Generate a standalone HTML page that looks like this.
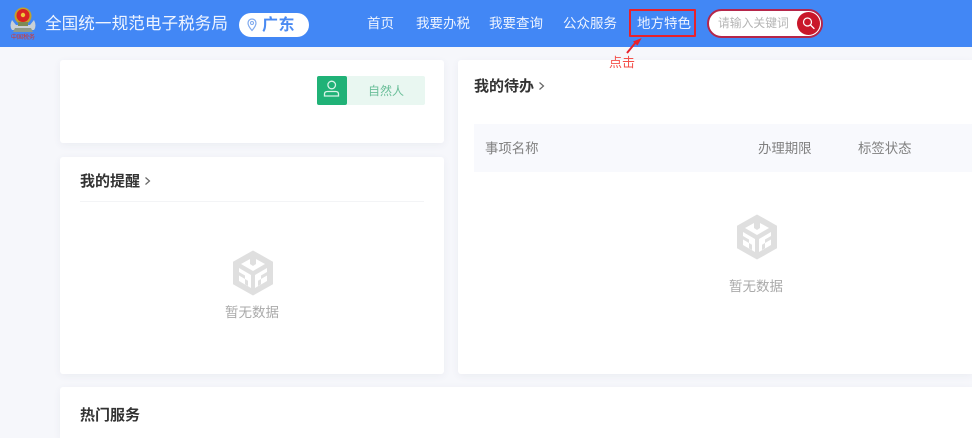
<!DOCTYPE html>
<html lang="zh-CN">
<head>
<meta charset="utf-8">
<style>
html,body{margin:0;padding:0;width:972px;height:438px;overflow:hidden;}
body{position:relative;background:#f6f7fb;font-family:"Liberation Sans","Noto Sans CJK SC",sans-serif;}
#w{position:absolute;left:0;top:0;width:972px;height:438px;overflow:hidden;filter:blur(.3px);}
.a{position:absolute;white-space:nowrap;line-height:1;}
.hd{position:absolute;left:0;top:0;width:972px;height:47px;background:#4287f5;}
.nav{color:#eef4ff;font-size:13.5px;top:17px;}
.card{position:absolute;background:#fff;border-radius:3px;box-shadow:0 2px 8px rgba(60,70,100,.06);}
.ttl{color:#333;font-size:15px;font-weight:700;}
.th{color:#808080;font-size:13.4px;top:142px;}
.empty{color:#aaa;font-size:13.5px;}
</style>
</head>
<body>
<div id="w">
<div class="hd"></div>

<svg class="a" style="left:5px;top:1px" width="36" height="42" viewBox="0 0 36 42">
<path d="M7 19 Q4 25 7 29 L29 29 Q32 25 29 19 L25 24 L11 24Z" fill="#c9d0d6"/>
<path d="M10 27 L26 27 L28 31 L8 31Z" fill="#8f9a8a"/>
<circle cx="18" cy="15" r="8.500" fill="#c2a12c"/>
<circle cx="18" cy="14.500" r="6.500" fill="#d92323"/>
<circle cx="18" cy="14" r="2.200" fill="#efc73c"/>
<rect x="13" y="21" width="10" height="4" fill="#7d8a55"/>
<text x="18" y="38" font-size="6" text-anchor="middle" fill="#d8342a" font-family="Liberation Sans,Noto Sans CJK SC,sans-serif">中国税务</text>
</svg>

<div class="a" style="left:45px;top:16px;font-size:16.6px;color:#eef4ff;letter-spacing:.05px">全国统一规范电子税务局</div>

<div class="a" style="left:239px;top:13px;width:70px;height:24px;background:#fff;border-radius:12px"></div>
<svg class="a" style="left:247px;top:18px" width="10" height="14" viewBox="0 0 10 14">
<path d="M5 1C2.600 1 1 2.800 1 5c0 3 4 7.500 4 7.500S9 8 9 5C9 2.800 7.400 1 5 1Z" fill="none" stroke="#7fa9ee" stroke-width="1.200"/>
<circle cx="5" cy="5" r="1.500" fill="none" stroke="#7fa9ee" stroke-width="1"/>
</svg>
<div class="a" style="left:262px;top:18px;font-size:16px;font-weight:700;color:#4a8af2;letter-spacing:.5px">广东</div>

<div class="a nav" style="left:367px">首页</div>
<div class="a nav" style="left:416px">我要办税</div>
<div class="a nav" style="left:489px">我要查询</div>
<div class="a nav" style="left:563px">公众服务</div>
<div class="a nav" style="left:637px">地方特色</div>

<div class="a" style="left:707px;top:9px;width:112px;height:25px;background:#fff;border:2px solid #b5264a;border-radius:15px"></div>
<div class="a" style="left:718px;top:18px;font-size:11.800px;color:#b4b4b4">请输入关键词</div>
<div class="a" style="left:797px;top:12px;width:23px;height:23px;border-radius:50%;background:#c9172a"></div>
<svg class="a" style="left:801px;top:16px" width="15" height="15" viewBox="0 0 15 15">
<circle cx="6.500" cy="6" r="4" fill="none" stroke="#fff" stroke-width="1.200"/>
<path d="M9.500 9 L13 12.500" stroke="#fff" stroke-width="1.300" stroke-linecap="round"/>
</svg>

<div class="card" style="left:60px;top:60px;width:384px;height:83px"></div>
<div class="a" style="left:317px;top:76px;width:108px;height:29px;background:#e9f7f1;border-radius:2px"></div>
<div class="a" style="left:317px;top:76px;width:30px;height:29px;background:#20b277;border-radius:2px"></div>
<svg class="a" style="left:323px;top:80px" width="18" height="20" viewBox="0 0 18 20">
<circle cx="8.700" cy="5" r="3.800" fill="none" stroke="#d8f3e7" stroke-width="1.300"/>
<path d="M1.500 16 V14 Q1.500 11.500 4.500 11.500 H12.500 Q15.500 11.500 15.500 14 V16Z" fill="none" stroke="#d8f3e7" stroke-width="1.300"/>
</svg>
<div class="a" style="left:368px;top:85px;font-size:12px;color:#6cbf9a">自然人</div>

<div class="card" style="left:60px;top:157px;width:384px;height:217px"></div>
<div class="a ttl" style="left:80px;top:174px">我的提醒</div>
<svg class="a" style="left:144px;top:176px" width="7" height="11" viewBox="0 0 7 11"><path d="M1.500 1.500 L5.500 5 L1.500 8.500" fill="none" stroke="#666" stroke-width="1.200"/></svg>
<div class="a" style="left:80px;top:201px;width:344px;height:1px;background:#f3f4f6"></div>

<svg class="a" style="left:232px;top:250px" width="42" height="46" viewBox="0 0 42 46">
<path d="M21 1 L40.500 12 L40.500 34 L21 45 L1.500 34 L1.500 12Z" fill="#dfdfdf" stroke="#dfdfdf" stroke-width="1" stroke-linejoin="round"/>
<path d="M9 14 L18 9 L18 14 L21 16 L24 14 L24 9 L33 14 L21 21Z" fill="#fff"/>
<path d="M7 18 L19 25 L19 38 L7 31Z M35 18 L23 25 L23 38 L35 31Z" fill="#fff"/>
<path d="M7 22 L13 25.500 L13 29 L7 25.500Z M35 22 L29 25.500 L29 29 L35 25.500Z M13 29 L16 30.800 L16 36 L13 34.300Z M29 29 L26 30.800 L26 36 L29 34.300Z" fill="#dfdfdf"/>
</svg>
<div class="a empty" style="left:225px;top:306px">暂无数据</div>

<div class="card" style="left:458px;top:60px;width:514px;height:314px;border-radius:3px 0 0 3px"></div>
<div class="a ttl" style="left:474px;top:79px">我的待办</div>
<svg class="a" style="left:538px;top:81px" width="7" height="11" viewBox="0 0 7 11"><path d="M1.500 1.500 L5.500 5 L1.500 8.500" fill="none" stroke="#666" stroke-width="1.200"/></svg>

<div class="a" style="left:474px;top:124px;width:498px;height:48px;background:#f8f9fd"></div>
<div class="a th" style="left:485px">事项名称</div>
<div class="a th" style="left:758px">办理期限</div>
<div class="a th" style="left:858px">标签状态</div>

<svg class="a" style="left:736px;top:214px" width="42" height="46" viewBox="0 0 42 46">
<path d="M21 1 L40.500 12 L40.500 34 L21 45 L1.500 34 L1.500 12Z" fill="#dfdfdf" stroke="#dfdfdf" stroke-width="1" stroke-linejoin="round"/>
<path d="M9 14 L18 9 L18 14 L21 16 L24 14 L24 9 L33 14 L21 21Z" fill="#fff"/>
<path d="M7 18 L19 25 L19 38 L7 31Z M35 18 L23 25 L23 38 L35 31Z" fill="#fff"/>
<path d="M7 22 L13 25.500 L13 29 L7 25.500Z M35 22 L29 25.500 L29 29 L35 25.500Z M13 29 L16 30.800 L16 36 L13 34.300Z M29 29 L26 30.800 L26 36 L29 34.300Z" fill="#dfdfdf"/>
</svg>
<div class="a empty" style="left:729px;top:280px">暂无数据</div>

<div class="card" style="left:60px;top:387px;width:912px;height:51px;border-radius:3px 0 0 0"></div>
<div class="a ttl" style="left:80px;top:408px">热门服务</div>

<div class="a" style="left:629px;top:9px;width:63px;height:24px;border:2px solid #e8212b;border-radius:1px"></div>
<svg class="a" style="left:622px;top:36px" width="24" height="20" viewBox="0 0 24 20">
<path d="M5 17 L14 6" stroke="#e8212b" stroke-width="2" fill="none"/>
<path d="M19.700 2 L11 5.500 L15.500 9.500Z" fill="#e8212b"/>
</svg>
<div class="a" style="left:609px;top:56px;font-size:13px;color:#f4504a">点击</div>
</div>
</body>
</html>
